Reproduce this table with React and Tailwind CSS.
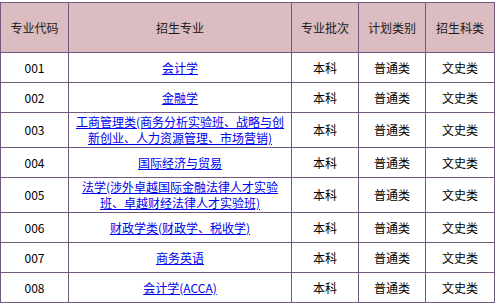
import React from "react";

// --- Admission majors table ---

const rows = [
  { code: "001", name: "会计学", tall: false },
  { code: "002", name: "金融学", tall: false },
  { code: "003", name: "工商管理类(商务分析实验班、战略与创新创业、人力资源管理、市场营销)", tall: true },
  { code: "004", name: "国际经济与贸易", tall: false },
  { code: "005", name: "法学(涉外卓越国际金融法律人才实验班、卓越财经法律人才实验班)", tall: true },
  { code: "006", name: "财政学类(财政学、税收学)", tall: false },
  { code: "007", name: "商务英语", tall: false },
  { code: "008", name: "会计学(ACCA)", tall: false },
];

const headers = ["专业代码", "招生专业", "专业批次", "计划类别", "招生科类"];
const cell = "border border-[#725a7e] text-center align-middle p-0";

export default function App() {
  return (
    <div
      className="w-[498px] h-[308px] bg-white pt-[2px]"
      style={{ fontFamily: '"Noto Sans CJK SC", "Liberation Sans", sans-serif' }}
    >
      <table className="border-collapse table-fixed w-[494px] text-[12px] leading-[16px] text-black">
        <colgroup>
          <col className="w-[68px]" />
          <col className="w-[223px]" />
          <col className="w-[67px]" />
          <col className="w-[67px]" />
          <col className="w-[69px]" />
        </colgroup>
        <thead>
          <tr className="h-[50px] bg-[#dbbdc1]">
            {headers.map((h) => (
              <th key={h} className={`${cell} font-normal text-[#1a1a1a]`}>
                {h}
              </th>
            ))}
          </tr>
        </thead>
        <tbody>
          {rows.map((r) => (
            <tr key={r.code} className={r.tall ? "h-[35px]" : "h-[30px]"}>
              <td className={cell}>{r.code}</td>
              <td className={`${cell} px-[6px]`}>
                <a href="#" className="text-[#0000ee] underline">
                  {r.name}
                </a>
              </td>
              <td className={cell}>本科</td>
              <td className={cell}>普通类</td>
              <td className={cell}>文史类</td>
            </tr>
          ))}
        </tbody>
      </table>
    </div>
  );
}
